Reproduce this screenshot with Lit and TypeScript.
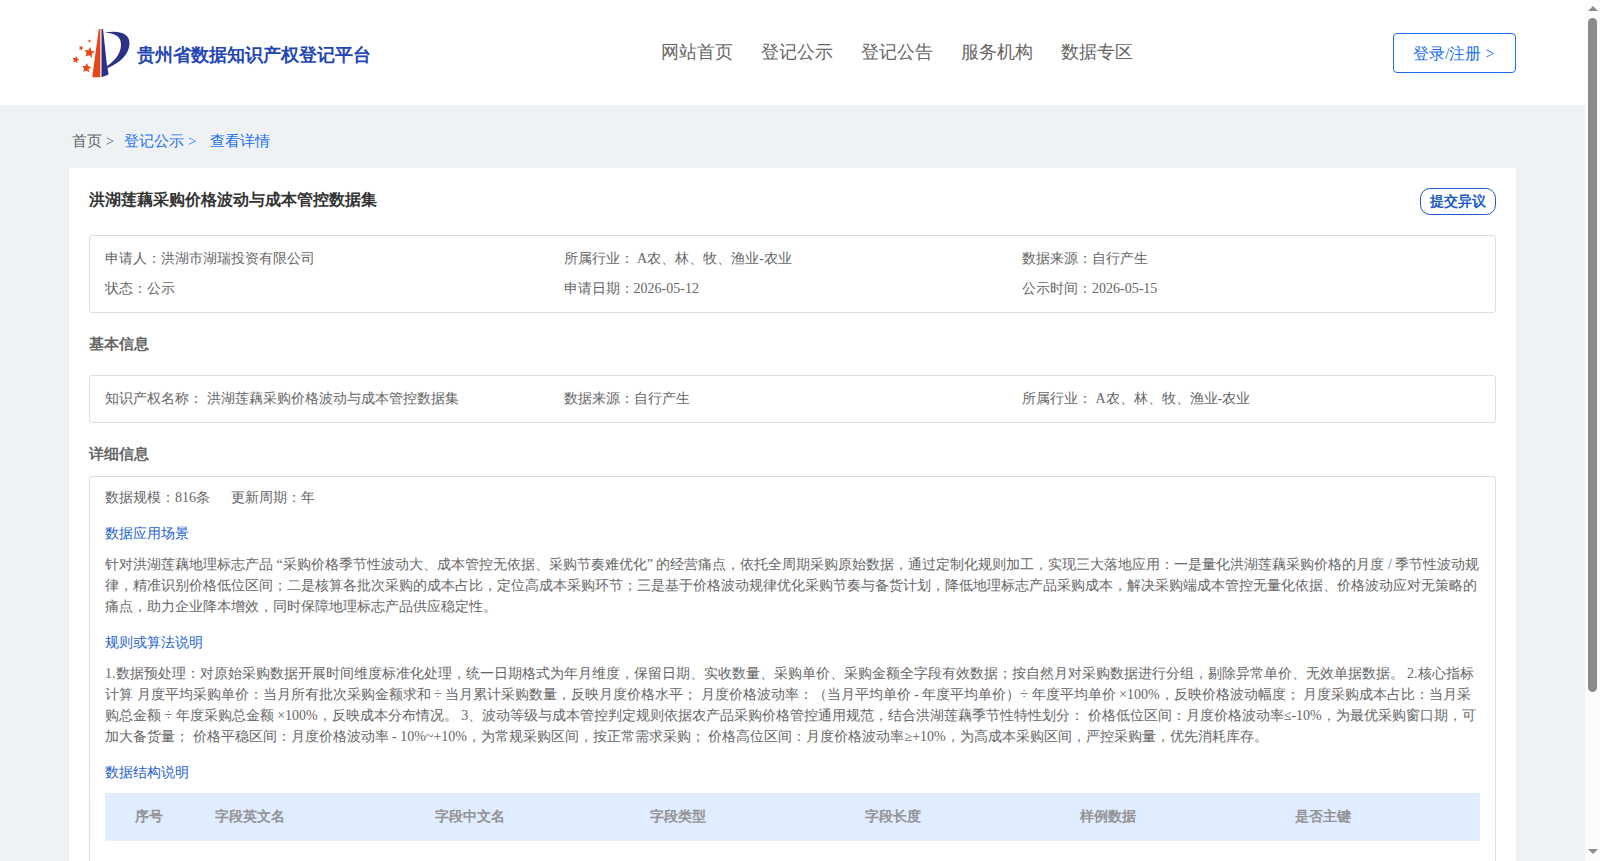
import { LitElement, html, css, svg } from "lit";
import { customElement } from "lit/decorators.js";

const NAV = ["网站首页", "登记公示", "登记公告", "服务机构", "数据专区"];

const SUMMARY = [
  "申请人：洪湖市湖瑞投资有限公司",
  "所属行业： A农、林、牧、渔业-农业",
  "数据来源：自行产生",
  "状态：公示",
  "申请日期：2026-05-12",
  "公示时间：2026-05-15",
];

const BASIC = [
  "知识产权名称： 洪湖莲藕采购价格波动与成本管控数据集",
  "数据来源：自行产生",
  "所属行业： A农、林、牧、渔业-农业",
];

const SCENE =
  "针对洪湖莲藕地理标志产品 “采购价格季节性波动大、成本管控无依据、采购节奏难优化” 的经营痛点，依托全周期采购原始数据，通过定制化规则加工，实现三大落地应用：一是量化洪湖莲藕采购价格的月度 / 季节性波动规律，精准识别价格低位区间；二是核算各批次采购的成本占比，定位高成本采购环节；三是基于价格波动规律优化采购节奏与备货计划，降低地理标志产品采购成本，解决采购端成本管控无量化依据、价格波动应对无策略的痛点，助力企业降本增效，同时保障地理标志产品供应稳定性。";

const RULES =
  "1.数据预处理：对原始采购数据开展时间维度标准化处理，统一日期格式为年月维度，保留日期、实收数量、采购单价、采购金额全字段有效数据；按自然月对采购数据进行分组，剔除异常单价、无效单据数据。 2.核心指标计算 月度平均采购单价：当月所有批次采购金额求和 ÷ 当月累计采购数量，反映月度价格水平； 月度价格波动率：（当月平均单价 - 年度平均单价）÷ 年度平均单价 ×100%，反映价格波动幅度； 月度采购成本占比：当月采购总金额 ÷ 年度采购总金额 ×100%，反映成本分布情况。 3、波动等级与成本管控判定规则依据农产品采购价格管控通用规范，结合洪湖莲藕季节性特性划分： 价格低位区间：月度价格波动率≤-10%，为最优采购窗口期，可加大备货量； 价格平稳区间：月度价格波动率 - 10%~+10%，为常规采购区间，按正常需求采购； 价格高位区间：月度价格波动率≥+10%，为高成本采购区间，严控采购量，优先消耗库存。";

const COLUMNS = ["序号", "字段英文名", "字段中文名", "字段类型", "字段长度", "样例数据", "是否主键"];

// Logo stars: centre x, centre y, outer radius, rotation in degrees
const STARS = [
  [18.4, 26.6, 5.6, 10],
  [15.5, 42, 5, 5],
  [4.8, 33.7, 3.7, 12],
  [10.1, 22, 2.5, 20],
  [18.5, 15, 1.7, 10],
];

const starPoints = ([cx, cy, r, rot]: number[]) =>
  Array.from({ length: 10 }, (_, i) => {
    const a = ((i * 36 - 90 + rot) * Math.PI) / 180;
    const d = i % 2 ? r * 0.48 : r;
    return `${(cx + d * Math.cos(a)).toFixed(2)},${(cy + d * Math.sin(a)).toFixed(2)}`;
  }).join(" ");

@customElement("app-root")
export class AppRoot extends LitElement {
  static styles = css`
    :host {
      display: flex;
      height: 861px;
      overflow: hidden;
      font-family: "Liberation Serif", serif;
      font-size: 14px;
      color: #666;
      background: #eef2f5;
    }
    * { box-sizing: border-box; }
    .page { flex: 1; min-width: 0; height: 861px; overflow: hidden; }
    .header { height: 105px; background: #fff; padding: 0 69px; display: flex; }
    .brand { display: flex; width: 591.5px; padding: 26px 0 0 2px; }
    .logo { width: 60px; height: 54px; flex: none; }
    .name { margin-left: 6px; font-size: 18px; line-height: 58px; font-weight: bold; color: #2446b4; white-space: nowrap; }
    .nav { display: flex; gap: 28px; font-size: 18px; line-height: 104px; color: #666; white-space: nowrap; }
    .login { margin: 33px 0 0 auto; width: 123px; height: 40px; border: 1px solid #1a6ff0; border-radius: 4px; color: #1a6ff0; font-size: 16px; line-height: 39px; padding-left: 19px; white-space: nowrap; }
    .crumbs { height: 63px; padding: 0 72px; font-size: 15px; line-height: 72px; display: flex; white-space: nowrap; }
    .crumbs .link { color: #1a6ff0; margin-left: 10px; }
    .crumbs .last { margin-left: 14px; }
    .card { margin: 0 69px; background: #fff; padding: 20px; height: 760px; }
    .top { display: flex; justify-content: space-between; height: 47px; }
    .title { font-size: 16px; font-weight: bold; color: #333; line-height: 24px; }
    .objection { width: 76px; height: 27px; border: 1px solid #1e5bc8; border-radius: 10px; color: #1e5bc8; font-weight: bold; text-align: center; line-height: 26px; padding-right: 1px; }
    .box { border: 1px solid #dcdedf; border-radius: 3px; padding: 8px 15px; }
    .grid { display: grid; grid-template-columns: 458.6px 458.4px 1fr; line-height: 30px; white-space: nowrap; }
    .section { font-size: 15px; font-weight: bold; line-height: 62px; height: 62px; }
    .section.tight { height: 53px; }
    .detail { padding: 6px 15px; height: 500px; }
    .meta { line-height: 30px; display: flex; gap: 21px; }
    .sub { color: #1e5fd0; line-height: 21px; margin: 15px 0 10px; }
    .meta + .sub { margin-top: 10px; }
    .text { line-height: 21px; }
    .row { display: grid; grid-template-columns: 80px 220px 215px 215px 215px 215px 1fr; height: 48px; line-height: 47px; background: #e0ecff; color: #929394; font-weight: bold; padding-left: 30px; border-bottom: 1px solid #ebeef5; }
    .track { width: 15px; height: 861px; background: #fcfcfc; display: flex; flex-direction: column; align-items: center; padding: 6px 0 7px; }
    .arrow { width: 10px; height: 5px; fill: #8b8b8b; display: block; flex: none; }
    .thumb { width: 9px; height: 674px; margin: 7px 0 auto; border-radius: 5px; background: #8b8b8b; }
  `;

  render() {
    return html`
      <div class="page">
        <header class="header">
          <div class="brand">
            <svg class="logo" viewBox="0 0 60 54">
              <path fill="#e84715" d="M27.800 3H29.300V51.200H21.200Z" />
              <path fill="#2a3187" d="M30.500 3H32L36 40C43 35.500 50 28 50 18.500C50 10.500 44 7 33.500 6.800C47 4 58.500 7 58.500 17C58.500 28.500 48.500 37 36.600 42L37.600 48.400L30.500 51.200Z" />
              <g fill="#e84715">${STARS.map((s) => svg`<polygon points=${starPoints(s)} />`)}</g>
            </svg>
            <div class="name">贵州省数据知识产权登记平台</div>
          </div>
          <nav class="nav">${NAV.map((n) => html`<span>${n}</span>`)}</nav>
          <div class="login">登录/注册 &gt;</div>
        </header>
        <div class="crumbs">
          <span>首页 &gt;</span><span class="link">登记公示 &gt;</span><span class="link last">查看详情</span>
        </div>
        <main class="card">
          <div class="top">
            <div class="title">洪湖莲藕采购价格波动与成本管控数据集</div>
            <div class="objection">提交异议</div>
          </div>
          <div class="box grid">${SUMMARY.map((t) => html`<span>${t}</span>`)}</div>
          <div class="section">基本信息</div>
          <div class="box grid">${BASIC.map((t) => html`<span>${t}</span>`)}</div>
          <div class="section tight">详细信息</div>
          <div class="box detail">
            <div class="meta"><span>数据规模：816条</span><span>更新周期：年</span></div>
            <div class="sub">数据应用场景</div>
            <div class="text">${SCENE}</div>
            <div class="sub">规则或算法说明</div>
            <div class="text">${RULES}</div>
            <div class="sub">数据结构说明</div>
            <div class="row">${COLUMNS.map((c) => html`<span>${c}</span>`)}</div>
          </div>
        </main>
      </div>
      <div class="track">
        <svg class="arrow" viewBox="0 0 10 5"><path d="M5 0L10 5H0Z" /></svg>
        <div class="thumb"></div>
        <svg class="arrow" viewBox="0 0 10 5"><path d="M0 0H10L5 5Z" /></svg>
      </div>
    `;
  }
}
